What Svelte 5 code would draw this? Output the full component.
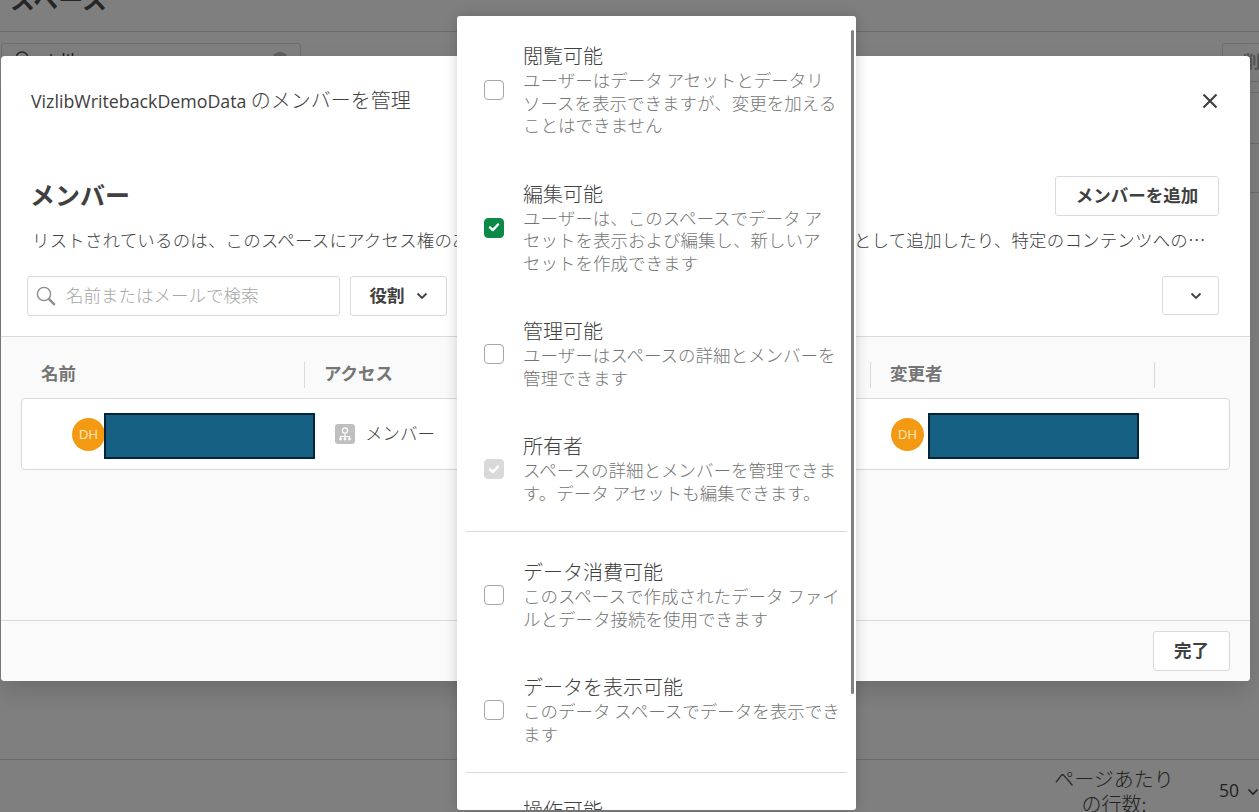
<script>
  const group1 = [
    { title: '閲覧可能', desc: 'ユーザーはデータ アセットとデータリ\nソースを表示できますが、変更を加える\nことはできません', state: 'off' },
    { title: '編集可能', desc: 'ユーザーは、このスペースでデータ ア\nセットを表示および編集し、新しいア\nセットを作成できます', state: 'on' },
    { title: '管理可能', desc: 'ユーザーはスペースの詳細とメンバーを\n管理できます', state: 'off' },
    { title: '所有者', desc: 'スペースの詳細とメンバーを管理できま\nす。データ アセットも編集できます。', state: 'dis' }
  ];
  const group2 = [
    { title: 'データ消費可能', desc: 'このスペースで作成されたデータ ファイ\nルとデータ接続を使用できます', state: 'off' },
    { title: 'データを表示可能', desc: 'このデータ スペースでデータを表示でき\nます', state: 'off' }
  ];
  const columns = [
    { label: '名前', w: 284 },
    { label: 'アクセス', w: 283 },
    { label: '', w: 283 },
    { label: '変更者', w: 284 }
  ];
</script>

{#snippet option(o)}
  <div class="option">
    <span class="check {o.state}">
      {#if o.state !== 'off'}
        <svg viewBox="0 0 20 20" width="20" height="20"><path d="M6 10.4l2.8 2.7 5.2-5.6" fill="none" stroke="#fff" stroke-width="2.4" stroke-linecap="round" stroke-linejoin="round"/></svg>
      {/if}
    </span>
    <div class="otext">
      <div class="otitle">{o.title}</div>
      <div class="odesc">{o.desc}</div>
    </div>
  </div>
{/snippet}

{#snippet chevron()}
  <svg class="chev" viewBox="0 0 12 8" width="12" height="8"><path d="M1.5 1.5L6 6l4.5-4.5" fill="none" stroke="#404040" stroke-width="1.8"/></svg>
{/snippet}

{#snippet person()}
  <span class="avatar">DH</span>
  <span class="redact"></span>
{/snippet}

<div class="page">
  <header class="ptitle"><h1>スペース</h1></header>
  <div class="ptools">
    <div class="psearch">
      <svg viewBox="0 0 20 20" width="20" height="20"><circle cx="10" cy="10" r="6" fill="none" stroke="#2a2a2a" stroke-width="1.5"/></svg>
      <span class="ptext">vizlib</span>
      <span class="pclear"></span>
    </div>
    <div class="pbtn">削除</div>
  </div>
  <div class="pline l1"></div>
  <div class="pline l2"></div>
  <div class="pline l3"></div>
  <footer class="pfoot">
    <span class="rows">ページあたり<br>の行数:</span>
    <span class="fifty">50</span>
    <svg viewBox="0 0 12 8" width="12" height="8"><path d="M1.5 1.5L6 6l4.5-4.5" fill="none" stroke="#222" stroke-width="1.6"/></svg>
  </footer>

  <section class="modal">
    <div class="mhead">
      <span class="mtitle"><span class="mname">VizlibWritebackDemoData</span> のメンバーを管理</span>
      <svg class="close" viewBox="0 0 16 16" width="16" height="16"><path d="M1.5 1.5l13 13M14.5 1.5l-13 13" stroke="#404040" stroke-width="2.2"/></svg>
    </div>
    <div class="mintro">
      <div class="mrow">
        <h2>メンバー</h2>
        <button class="btn add">メンバーを追加</button>
      </div>
      <p class="lede">リストされているのは、このスペースにアクセス権のあるメンバーです。ユーザーやグループをメンバーとして追加したり、特定のコンテンツへのアクセス権を付与したりできます</p>
      <div class="filters">
        <div class="search">
          <svg viewBox="0 0 22 22" width="22" height="22"><circle cx="9" cy="9" r="6.6" fill="none" stroke="#8c8c8c" stroke-width="1.4"/><path d="M13.8 13.8l6 6" stroke="#8c8c8c" stroke-width="2.4"/></svg>
          <span class="ph">名前またはメールで検索</span>
        </div>
        <button class="btn role">役割 {@render chevron()}</button>
        <button class="btn more">{@render chevron()}</button>
      </div>
    </div>
    <div class="mbody">
      <div class="thead">
        {#each columns as c}
          <div class="th" style="width:{c.w}px">{c.label}</div>
        {/each}
      </div>
      <div class="trow">
        <div class="cell first">{@render person()}</div>
        <div class="cell access">
          <span class="roleicon">
            <svg viewBox="0 0 20 20" width="20" height="20"><circle cx="10" cy="6.5" r="2.6" fill="none" stroke="#fff" stroke-width="1.2"/><path d="M10 9.5v3M5.5 14v-1.5h9V14M10 12.5V14" fill="none" stroke="#fff" stroke-width="1.1"/><circle cx="5.5" cy="15" r="1.4" fill="#fff"/><circle cx="10" cy="15" r="1.4" fill="#fff"/><circle cx="14.5" cy="15" r="1.4" fill="#fff"/></svg>
          </span>
          <span class="rolename">メンバー</span>
        </div>
        <div class="cell last">{@render person()}</div>
      </div>
    </div>
    <div class="mfoot"><button class="btn done">完了</button></div>
  </section>

  <aside class="menu">
    <div class="scroll"></div>
    <div class="group g1">
      {#each group1 as o}{@render option(o)}{/each}
    </div>
    <div class="group g2">
      {#each group2 as o}{@render option(o)}{/each}
    </div>
    <div class="group g3">
      <div class="otitle cut">操作可能</div>
    </div>
  </aside>
</div>

<style>
  :global(body) { margin: 0; }
  .page {
    position: relative;
    width: 1259px;
    height: 812px;
    overflow: hidden;
    background: #7f7f7f;
    color: #222;
    font-family: "Noto Sans CJK JP", "Noto Sans", sans-serif;
    font-weight: 400;
  }
  .ptitle { height: 31px; border-bottom: 1px solid #6b6b6b; position: relative; box-sizing: content-box; }
  h1 { position: absolute; left: 10px; top: -20px; margin: 0; font-size: 25px; line-height: 36px; font-weight: 700; color: #262626; white-space: nowrap; }
  .ptools { display: flex; justify-content: space-between; padding: 11px 0 0 1px; }
  .psearch { width: 300px; height: 40px; border: 1px solid #6d6d6d; border-radius: 3px; display: flex; align-items: flex-start; gap: 8px; padding: 4px 12px 0 10px; box-sizing: border-box; }
  .ptext { font-size: 17.5px; line-height: 24px; font-family: "Open Sans", sans-serif; }
  .pclear { width: 16px; height: 16px; border-radius: 50%; background: #5f5f5f; margin: 4px 0 0 auto; }
  .pbtn { width: 60px; height: 39px; margin-right: -23px; border: 1px solid #6d6d6d; border-radius: 3px; box-sizing: border-box; padding: 4px 0 0 20px; font-size: 17.5px; font-weight: 700; color: #555; white-space: nowrap; overflow: hidden; }
  .pline { position: absolute; left: 1250px; right: 0; height: 1px; background: #6d6d6d; }
  .l1 { top: 92px; } .l2 { top: 143px; } .l3 { top: 192px; }
  .pfoot { position: absolute; left: 0; right: 0; top: 759px; bottom: 0; border-top: 1px solid #6a6a6a; display: flex; align-items: flex-start; padding-left: 1054px; box-sizing: border-box; }
  .rows { width: 120px; font-size: 20px; line-height: 25px; text-align: center; font-weight: 300; margin-top: 6px; color: #222; white-space: nowrap; flex: none; }
  .fifty { font-size: 17.5px; font-family: "Open Sans", sans-serif; margin: 18px 0 0 45px; color: #222; }
  .pfoot svg { margin: 28px 0 0 8px; flex: none; }

  .modal {
    position: absolute; left: 1px; top: 56px; width: 1249px; height: 625px;
    border-radius: 4px; background: #fff;
    display: flex; flex-direction: column;
    box-shadow: 0 10px 24px rgba(0,0,0,.14);
    overflow: hidden;
    color: #404040;
  }
  .mhead { height: 89px; display: flex; justify-content: space-between; padding: 34px 32px 0 30px; box-sizing: border-box; flex: none; }
  .mtitle { font-size: 20px; line-height: 20px; color: #404040; font-weight: 300; white-space: nowrap; }
  .mname { font-family: "Open Sans", sans-serif; font-size: 17.8px; font-weight: 400; }
  .close { margin-top: 3px; }
  .mintro { flex: none; height: 192px; padding: 31px 31px 0 26px; box-sizing: border-box; border-bottom: 1px solid #d9d9d9; }
  .mrow { display: flex; justify-content: space-between; align-items: flex-start; padding-left: 3px; height: 40px; }
  h2 { margin: 0; font-size: 25px; line-height: 36px; font-weight: 700; color: #404040; }
  .lede { margin: 11px 10px 0 5px; font-size: 17.5px; line-height: 26px; font-weight: 300; letter-spacing: .15px; color: #404040; white-space: nowrap; overflow: hidden; text-overflow: ellipsis; }
  .filters { display: flex; gap: 10px; margin-top: 23px; }
  .search { width: 313px; height: 40px; box-sizing: border-box; border: 1px solid #d9d9d9; border-radius: 3px; display: flex; align-items: center; gap: 8px; padding-left: 7px; color: #a6a6a6; font-size: 17.5px; font-weight: 300; white-space: nowrap; }
  .ph { padding-bottom: 3px; margin-left: 1px; }
  .btn { height: 40px; box-sizing: border-box; background: #fff; border: 1px solid #d9d9d9; border-radius: 3px; font: inherit; font-size: 17.5px; font-weight: 700; color: #404040; display: flex; align-items: center; justify-content: center; padding: 0 0 3px; }
  .add { width: 164px; }
  .role { width: 97px; gap: 11px; }
  .more { width: 57px; height: 39px; margin-left: auto; padding: 0 0 0 11px; }
  .chev { flex: none; }
  .role .chev { margin-top: 3px; }
  .mbody { flex: 1; background: #fafafa; padding: 0 20px; box-sizing: border-box; }
  .thead { display: flex; height: 61px; padding-top: 25px; box-sizing: border-box; }
  .th { height: 26px; border-right: 1px solid #d9d9d9; box-sizing: border-box; padding-left: 19px; font-size: 17.5px; line-height: 22px; font-weight: 700; color: #757575; flex: none; white-space: nowrap; }
  .th:first-child { padding-left: 20px; }
  .trow { height: 72px; background: #fff; border: 1px solid #d9d9d9; border-radius: 4px; box-sizing: border-box; display: flex; align-items: center; position: relative; width: 1209px; }
  .cell { display: flex; align-items: center; flex: none; }
  .first { margin-left: 50px; width: 263px; }
  .access { width: 556px; gap: 10px; font-size: 17.5px; font-weight: 300; color: #404040; }
  .rolename { margin-top: -3px; }
  .roleicon { width: 20px; height: 20px; border-radius: 3px; background: #bfbfbf; display: block; }
  .roleicon svg { display: block; }
  .avatar { width: 33px; height: 33px; border-radius: 50%; background: #f49a12; color: #fde3b8; font-family: "Liberation Sans", sans-serif; font-size: 13px; display: flex; align-items: center; justify-content: center; flex: none; }
  .redact { width: 211px; height: 46px; box-sizing: border-box; background: #166083; border: 2px solid #04243a; flex: none; margin-left: -1px; margin-top: 4px; }
  .last .redact { margin-left: 4px; }
  .mfoot { height: 61px; background: #fafafa; border-top: 1px solid #d9d9d9; box-sizing: border-box; flex: none; display: flex; justify-content: flex-end; padding: 10px 20px 0 0; }
  .done { width: 77px; }

  .menu {
    position: absolute; left: 457px; top: 16px; width: 399px; height: 794px;
    border-radius: 3px; background: #fff; overflow: hidden;
    box-shadow: 0 0 14px rgba(0,0,0,.18);
  }
  .scroll { position: absolute; right: 2px; top: 14px; width: 3px; height: 664px; background: #808080; border-radius: 2px; }
  .group { margin: 0 9px; }
  .g1 { padding-top: 28px; border-bottom: 1px solid #d9d9d9; height: 516px; box-sizing: border-box; }
  .g2 { padding-top: 28px; border-bottom: 1px solid #d9d9d9; height: 241px; box-sizing: border-box; }
  .g3 { padding: 25px 0 0 57px; }
  .option { display: flex; align-items: center; gap: 19px; padding-left: 18px; margin-bottom: 45px; }
  .check { width: 20px; height: 20px; box-sizing: border-box; border: 1.5px solid #a6a6a6; border-radius: 4px; flex: none; background: #fff; display: block; }
  .check svg { display: block; margin: -1.5px; }
  .check.on { background: #0a8a46; border-color: #0a8a46; }
  .check.dis { background: #d9d9d9; border-color: #d9d9d9; }
  .otext { width: 326px; flex: none; }
  .otitle { font-size: 20px; line-height: 23px; margin-bottom: 2px; font-weight: 300; color: #404040; white-space: nowrap; }
  .odesc { font-size: 17.5px; line-height: 22.5px; font-weight: 300; color: #757575; white-space: pre; }
</style>
